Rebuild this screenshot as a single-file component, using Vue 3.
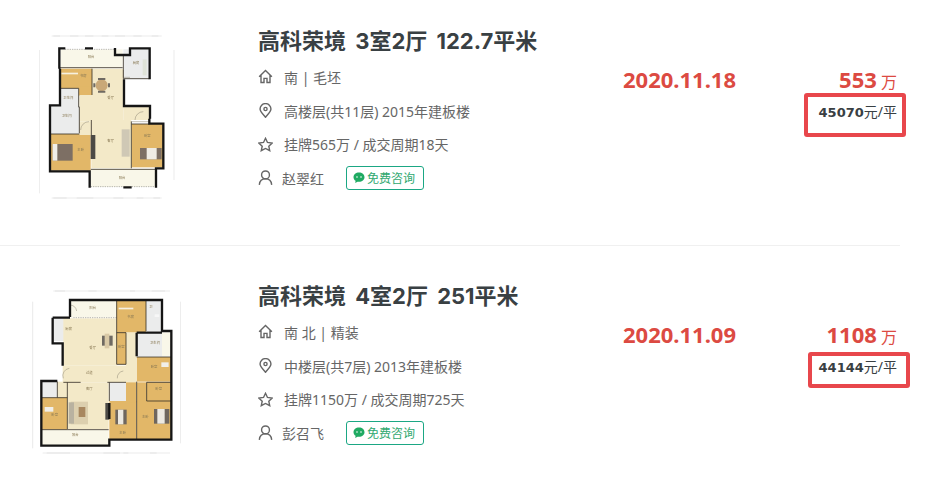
<template>
  <div class="page">
    <div v-for="item in listings" :key="item.title" class="row" :class="item.mark">
      <svg class="plan" viewBox="0 0 570 600">
        <g class="dims">
          <path v-for="d in item.plan.dims" :key="d" :d="d" />
        </g>
        <rect
          v-for="(r, i) in item.plan.rooms"
          :key="i"
          :x="r[0]"
          :y="r[1]"
          :width="r[2]"
          :height="r[3]"
          :fill="colors[r[4]]"
        />
        <path v-for="(f, i) in item.plan.furniture" :key="'f' + i" :d="f[0]" :fill="f[1]" />
        <path class="thin" :d="item.plan.thin" />
        <path class="edge" :d="item.plan.edge" />
        <path class="inner" :d="item.plan.inner" />
        <path class="wall" :d="item.plan.walls" />
        <text v-for="(t, i) in item.plan.labels" :key="'t' + i" :x="t[0]" :y="t[1]" class="room-label">{{ t[2] }}</text>
      </svg>

      <div class="info">
        <div class="title">{{ item.title }}</div>
        <div class="line">
          <svg class="icon" viewBox="0 0 16 16">
            <path d="M1.2 8.2 8 1.6 14.8 8.2M3.2 6.6V14.4H6.4V10H9.6V14.4H12.8V6.6" />
          </svg>
          <span>{{ item.house }}</span>
        </div>
        <div class="line">
          <svg class="icon" viewBox="0 0 16 16">
            <path d="M8 15.2C5 11.6 2.2 9.4 2.2 6.4A5.8 5.8 0 0 1 13.8 6.4C13.8 9.4 11 11.6 8 15.2Z" />
            <circle cx="8" cy="6.4" r="1.7" />
          </svg>
          <span>{{ item.floor }}</span>
        </div>
        <div class="line">
          <svg class="icon" viewBox="0 0 16 16">
            <path d="M8 1.4 10.1 5.8 15.2 6.4 11.5 9.8 12.5 14.6 8 12.2 3.5 14.6 4.5 9.8 .8 6.4 5.9 5.8Z" />
          </svg>
          <span>{{ item.deal }}</span>
        </div>
        <div class="line">
          <svg class="icon" viewBox="0 0 16 16">
            <circle cx="8" cy="5.2" r="4.2" />
            <path d="M1.4 15.8C1.8 11.8 4.4 9.4 8 9.4S14.2 11.8 14.6 15.8" />
          </svg>
          <span class="agent">{{ item.agent }}</span>
          <span class="consult">
            <svg class="chat" viewBox="0 0 12 12">
              <path d="M6 .6C2.9.6.5 2.6.5 5.2C.5 6.7 1.3 8 2.6 8.8L2.2 11 4.5 9.7C5 9.8 5.5 9.8 6 9.8C9.1 9.8 11.5 7.8 11.5 5.2S9.1.6 6 .6Z" />
              <circle cx="4" cy="5" r=".8" fill="#fff" />
              <circle cx="8" cy="5" r=".8" fill="#fff" />
            </svg>
            免费咨询
          </span>
        </div>
      </div>

      <div class="date">{{ item.date }}</div>

      <div class="price">
        <div class="total"><b>{{ item.total }}</b> <span>万</span></div>
        <div class="unit"><b>{{ item.unit }}</b>元/平<i class="mark"></i></div>
      </div>
    </div>
  </div>
</template>

<script setup>
const colors = {
  o: '#e2b768',
  c: '#f3e9c8',
  l: '#f9f7e9',
  g: '#ebecec',
}

const planA = {
  dims: [
    'M95 48H425', 'M95 534H425', 'M58 90V520', 'M462 90V480',
    'M100 48h20M150 48h25M195 48h25M245 48h20M285 48h30M340 48h25M395 48h20',
    'M100 534h40M170 534h50M280 534h30M350 534h20M400 534h20',
  ],
  rooms: [
    [122, 88, 186, 54, 'l'],
    [310, 88, 78, 90, 'g'],
    [122, 146, 94, 60, 'o'],
    [176, 200, 40, 28, 'o'],
    [122, 205, 54, 55, 'g'],
    [216, 146, 94, 115, 'c'],
    [178, 225, 132, 80, 'c'],
    [310, 258, 78, 42, 'c'],
    [214, 300, 120, 145, 'c'],
    [92, 258, 86, 84, 'g'],
    [92, 342, 120, 110, 'o'],
    [178, 305, 36, 40, 'c'],
    [335, 312, 95, 130, 'o'],
    [212, 447, 196, 54, 'l'],
  ],
  furniture: [
    ['M227 196a18 18 0 1 0 36 0a18 18 0 1 0-36 0Z', '#c9a877'],
    ['M234 174h22v6h-22ZM234 212h22v6h-22ZM220 190h6v12h-6ZM264 190h6v12h-6Z', '#6f6a62'],
    ['M98 372h60v50h-60Z', '#7d6f64'],
    ['M98 372h14v50h-14Z', '#f1efe9'],
    ['M360 384h65v34h-65Z', '#7d6f64'],
    ['M380 384h30v34h-30Z', '#efece4'],
    ['M305 328h24v82h-24Z', '#cfc8b5'],
    ['M212 345h14v72h-14Z', '#4c4a46'],
    ['M368 118h12v48h-12Z', '#dfe3d8'],
    ['M124 158h50v5h-50Z', '#f6f0df'],
  ],
  thin: 'M345 300a25 25 0 0 1 25 -25M182 330a25 25 0 0 1 25 -25M336 305h50M310 150v22h20',
  edge: 'M135 88H195M222 88H285M212 500H310M335 500H405',
  inner:
    'M120 143H308M216 146V225M176 205V262M120 205H176M310 106V176H388M178 260V340M92 342H178M214 300V345M334 304V445M212 448H408M334 312H388',
  walls:
    'M118 146V85H136M195 85H219M285 84V105H330V85H389V178M312 178V258H390V296M388 296V311H430V445H408V503M310 502H335M209 503V454H90V256H120V146',
  labels: [
    [203, 114, '阳台'], [338, 132, '厨房'], [180, 170, '书房'], [130, 236, '卫生间'],
    [262, 238, '餐厅'], [125, 292, '卫生间'], [262, 366, '客厅'], [172, 394, '主卧'], [372, 352, '卧室'], [296, 477, '阳台'],
  ],
}

const planB = {
  dims: [
    'M100 48H450', 'M68 534H450', 'M38 80V520', 'M482 80V505',
    'M105 48h30M205 48h25M330 48h15M395 48h40',
    'M80 534h70M250 534h50M310 534h15M390 534h20',
  ],
  rooms: [
    [152, 76, 138, 52, 'l'],
    [290, 76, 88, 97, 'o'],
    [378, 76, 46, 92, 'g'],
    [100, 130, 60, 68, 'g'],
    [130, 130, 160, 142, 'c'],
    [290, 172, 28, 96, 'o'],
    [350, 172, 76, 72, 'g'],
    [426, 172, 26, 72, 'l'],
    [350, 246, 104, 74, 'o'],
    [380, 322, 74, 56, 'o'],
    [350, 322, 30, 60, 'o'],
    [350, 378, 104, 115, 'o'],
    [128, 272, 222, 50, 'c'],
    [318, 172, 32, 150, 'c'],
    [268, 322, 50, 56, 'g'],
    [268, 378, 80, 115, 'o'],
    [318, 322, 30, 60, 'o'],
    [66, 320, 46, 46, 'g'],
    [112, 320, 30, 48, 'c'],
    [66, 368, 76, 96, 'o'],
    [142, 322, 124, 140, 'c'],
    [66, 464, 200, 48, 'l'],
  ],
  furniture: [
    ['M152 380h52v68h-52Z', '#dccfae'],
    ['M146 382h16v64h-16Z', '#b9b2a0'],
    ['M176 396h20v30h-20Z', '#a8875f'],
    ['M246 182h32v30h-32Z', '#6f6a62'],
    ['M254 176h14v44h-14Z', '#d9c9a6'],
    ['M286 404h34v44h-34Z', '#6e665e'],
    ['M294 404h16v44h-16Z', '#ece9e1'],
    ['M402 402h46v44h-46Z', '#6e665e'],
    ['M412 402h22v44h-22Z', '#ece9e1'],
    ['M74 396h26v14h-26Z', '#f1efe9'],
    ['M424 262h22v14h-22Z', '#f1efe9'],
    ['M256 384h12v50h-12Z', '#4c4a46'],
    ['M404 118h14v8h-14Z', '#f7f7f7'],
    ['M296 98h44v5h-44Z', '#f4efe2'],
  ],
  thin: 'M150 90a22 22 0 0 1 20 18M130 310a22 22 0 0 1 18 -30M292 310a20 20 0 0 1 18 -22',
  edge: 'M160 128H290',
  inner:
    'M130 322H182M262 322H318M380 322H454M380 378H454M350 246H454M290 268H318M112 320V368M66 368H142M142 322V462M290 173H318V268M378 76V168M290 76V268M268 322V378M350 320V494M380 322V378M66 464H266',
  walls:
    'M150 126V75H426V168H454V494H350M350 494H268V512H64V318H112M64 318H112M98 128H150M98 128V205H128V272M350 173H426M350 173V244M268 384V432',
  labels: [
    [208, 102, '阳台'], [322, 130, '书房'], [388, 100, '卫'], [136, 164, '厨房'], [208, 222, '餐厅'],
    [294, 218, '卧室'], [390, 206, '卫生间'], [392, 280, '卧室'], [406, 346, '卧室'], [198, 346, '客厅'],
    [198, 296, '过道'], [94, 424, '卧室'], [298, 478, '主卧'], [366, 430, '主卧'], [156, 484, '阳台'],
  ],
}

const listings = [
  {
    title: '高科荣境 3室2厅 122.7平米',
    house: '南 | 毛坯',
    floor: '高楼层(共11层) 2015年建板楼',
    deal: '挂牌565万 / 成交周期18天',
    agent: '赵翠红',
    date: '2020.11.18',
    total: '553',
    unit: '45070',
    mark: 'mark-a',
    plan: planA,
  },
  {
    title: '高科荣境 4室2厅 251平米',
    house: '南 北 | 精装',
    floor: '中楼层(共7层) 2013年建板楼',
    deal: '挂牌1150万 / 成交周期725天',
    agent: '彭召飞',
    date: '2020.11.09',
    total: '1108',
    unit: '44144',
    mark: 'mark-b',
    plan: planB,
  },
]
</script>

<style>
html,
body {
  background: #fff;
  overflow: hidden;
}
</style>

<style scoped>
.page {
  width: 934px;
  height: 481px;
  overflow: hidden;
  font-family: "Noto Sans", "Noto Sans CJK SC", sans-serif;
  color: #666;
}
.row {
  display: grid;
  grid-template-columns: 190px 413px 120px 154px;
  width: 900px;
  height: 246px;
  margin-bottom: 9px;
  padding: 20px 0 0 20px;
  box-sizing: border-box;
  border-bottom: 1px solid #f0f0f0;
}
.plan {
  width: 190px;
  height: 200px;
  filter: blur(0.5px);
}
.dims path {
  fill: none;
  stroke: #d4d4d4;
  stroke-width: 1.5;
}
.thin {
  fill: none;
  stroke: #8d8675;
  stroke-width: 1.5;
}
.edge {
  fill: none;
  stroke: #777;
  stroke-width: 1.5;
  stroke-dasharray: 4 3;
}
.inner {
  fill: none;
  stroke: #3a3228;
  stroke-width: 2.5;
}
.wall {
  fill: none;
  stroke: #151515;
  stroke-width: 7;
}
.room-label {
  font-size: 10px;
  fill: #8a7a55;
}
.info {
  padding: 3px 0 0 48px;
}
.title {
  font-family: Inter, "Noto Sans CJK SC", sans-serif;
  font-size: 22px;
  font-weight: 700;
  line-height: 37px;
  word-spacing: 4px;
  color: #394043;
  white-space: nowrap;
}
.line {
  display: flex;
  align-items: center;
  height: 33.7px;
  font-size: 14px;
  white-space: nowrap;
}
.icon {
  width: 15px;
  height: 15px;
  margin-right: 11px;
  flex: none;
  fill: none;
  stroke: #666;
  stroke-width: 1.5;
}
.agent {
  margin-left: -2px;
  margin-right: 22px;
}
.consult {
  display: flex;
  align-items: center;
  width: 78px;
  height: 24px;
  box-sizing: border-box;
  padding-left: 6px;
  border: 1px solid #1ba784;
  border-radius: 3px;
  font-size: 12px;
  color: #2fa86f;
}
.chat {
  width: 12px;
  height: 12px;
  margin-right: 2px;
  fill: #1faa62;
}
.date {
  margin-top: 43px;
  font-size: 22px;
  font-weight: 700;
  line-height: 32px;
  color: #dc4a42;
}
.price {
  margin-top: 43px;
  text-align: right;
}
.total {
  line-height: 32px;
  color: #dc4a42;
  font-size: 16px;
}
.total b {
  font-size: 22px;
}
.unit {
  position: relative;
  line-height: 28px;
  font-size: 14px;
  color: #394043;
}
.unit b {
  font-family: "DejaVu Sans", sans-serif;
  font-size: 13px;
}
.mark {
  position: absolute;
  border: 4px solid #e8474c;
  border-radius: 3px;
  box-sizing: border-box;
}
.mark-a .mark {
  left: 61px;
  right: -9px;
  top: -5px;
  height: 44px;
}
.mark-b .mark {
  left: 65px;
  right: -13px;
  top: -1px;
  height: 36px;
}
</style>
